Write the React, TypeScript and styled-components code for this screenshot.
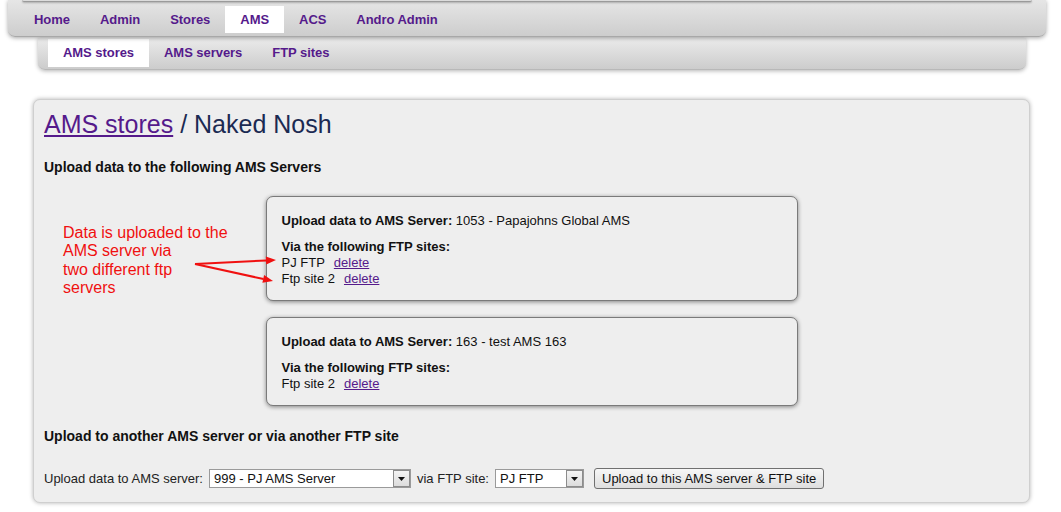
import React from "react";
import styled, { createGlobalStyle } from "styled-components";

const Global = createGlobalStyle`
  html, body { margin: 0; padding: 0; background: #ffffff; }
  body { font-family: "Liberation Sans", Arial, sans-serif; color: #111; }
  * { box-sizing: border-box; }
`;

const Page = styled.div`
  width: 1061px;
  padding-bottom: 10px;
`;

const MainNav = styled.div`
  margin: 0 15px 0 8px;
  height: 37px;
  background: linear-gradient(#e6e6e6, #cdcdcd);
  border-bottom: 1px solid #a8a8a8;
  border-radius: 0 0 7px 7px;
  box-shadow: 0 1px 4px rgba(0, 0, 0, 0.35);
  position: relative;
  z-index: 2;
`;

const TopStrip = styled.div`
  height: 2px;
  margin: 0 14px;
  background: #dcdcdc;
  border-bottom: 1px solid #9a9a9a;
  border-radius: 0 0 4px 4px;
  box-shadow: 0 1px 2px rgba(0, 0, 0, 0.25);
`;

const NavList = styled.div`
  display: flex;
  padding: 4px 0 0 11px;
`;

const NavItem = styled.a<{ $active?: boolean; $sub?: boolean }>`
  display: block;
  height: ${(p) => (p.$sub ? 28 : 27)}px;
  line-height: ${(p) => (p.$sub ? 28 : 27)}px;
  padding: 0 15px;
  font-size: 13px;
  font-weight: bold;
  letter-spacing: -0.05px;
  color: #551a8b;
  text-decoration: none;
  background: ${(p) => (p.$active ? "#ffffff" : "transparent")};
`;

const SubNav = styled.div`
  margin: 1px 35px 0 38px;
  height: 32px;
  background: linear-gradient(#ebebeb, #cccccc);
  border-bottom: 1px solid #b8b8b8;
  border-radius: 0 0 7px 7px;
  box-shadow: 0 1px 4px rgba(0, 0, 0, 0.3);
  display: flex;
  padding: 1px 0 0 10px;
  position: relative;
  z-index: 1;
`;

const Panel = styled.div`
  position: relative;
  margin: 29px 31px 0 33px;
  background: #eeeeee;
  border: 1px solid #cfcfcf;
  border-radius: 7px;
  box-shadow: 0 0 4px rgba(0, 0, 0, 0.3);
  padding: 9px 10px 13px 10px;
`;

const Title = styled.h1`
  margin: 0;
  font-size: 25px;
  line-height: 30px;
  font-weight: normal;
  color: #1b2a52;
`;

const TitleLink = styled.a`
  color: #551a8b;
  text-decoration: underline;
`;

const SectionHeading = styled.h2<{ $top: number }>`
  margin: ${(p) => p.$top}px 0 0 0;
  font-size: 14px;
  line-height: 18px;
  font-weight: bold;
  color: #111;
`;

const Cards = styled.div`
  display: flex;
  flex-direction: column;
  align-items: center;
  gap: 16px;
  margin-top: 20px;
`;

const Card = styled.div`
  width: 532px;
  border: 1px solid #7a7a7a;
  border-radius: 7px;
  background: #eeeeee;
  box-shadow: 0 1px 4px rgba(0, 0, 0, 0.45);
  padding: 16px 15px 13px 15px;
  font-size: 13px;
  line-height: 16px;
`;

const Line = styled.div<{ $gap?: boolean }>`
  margin-top: ${(p) => (p.$gap ? 10 : 0)}px;
`;

const Label = styled.b`
  font-weight: bold;
`;

const DelLink = styled.a`
  color: #551a8b;
  text-decoration: underline;
  margin-left: 9px;
`;

const Note = styled.div`
  position: absolute;
  left: 29px;
  top: 124px;
  width: 200px;
  font-size: 16px;
  line-height: 18.3px;
  color: #f01010;
`;

const Arrows = styled.svg`
  position: absolute;
  left: 157px;
  top: 152px;
  overflow: visible;
`;

const FormRow = styled.div`
  display: flex;
  align-items: center;
  margin-top: 23px;
  font-size: 13px;
  color: #222;
  height: 21px;
`;

const FieldLabel = styled.span<{ $gap: number }>`
  margin-right: ${(p) => p.$gap}px;
`;

const SelectWrap = styled.div<{ $w: number }>`
  position: relative;
  width: ${(p) => p.$w}px;
  height: 19px;
  margin-right: 6px;
`;

const Select = styled.select`
  appearance: none;
  -webkit-appearance: none;
  width: 100%;
  height: 19px;
  border: 1px solid #9a9a9a;
  background: #ffffff;
  font-family: "Liberation Sans", Arial, sans-serif;
  font-size: 13px;
  color: #111;
  padding: 0 0 0 4px;
  margin: 0;
  border-radius: 0;
  outline: none;
`;

const ArrowBox = styled.span`
  position: absolute;
  right: 1px;
  top: 1px;
  width: 17px;
  height: 17px;
  background: linear-gradient(#f4f4f4, #dcdcdc);
  border: 1px solid #8c8c8c;
  pointer-events: none;
  display: flex;
  align-items: center;
  justify-content: center;
`;

const Button = styled.button`
  margin-left: 4px;
  height: 21px;
  padding: 0 7px;
  border: 1px solid #707070;
  border-radius: 3px;
  background: linear-gradient(#f7f7f7, #dedede);
  font-family: "Liberation Sans", Arial, sans-serif;
  font-size: 13px;
  color: #111;
`;

const Tri = () => (
  <svg width="7" height="4" viewBox="0 0 7 4">
    <path d="M0 0 H7 L3.5 4 Z" fill="#111" />
  </svg>
);

const SelectField = ({ w, value }: { w: number; value: string }) => (
  <SelectWrap $w={w}>
    <Select defaultValue={value}>
      <option>{value}</option>
    </Select>
    <ArrowBox>
      <Tri />
    </ArrowBox>
  </SelectWrap>
);

const servers = [
  {
    name: "1053 - Papajohns Global AMS",
    sites: ["PJ FTP", "Ftp site 2"],
  },
  { name: "163 - test AMS 163", sites: ["Ftp site 2"] },
];

export default function App() {
  return (
    <Page>
      <Global />
      <MainNav>
        <TopStrip />
        <NavList>
          <NavItem href="#">Home</NavItem>
          <NavItem href="#">Admin</NavItem>
          <NavItem href="#">Stores</NavItem>
          <NavItem href="#" $active>
            AMS
          </NavItem>
          <NavItem href="#">ACS</NavItem>
          <NavItem href="#">Andro Admin</NavItem>
        </NavList>
      </MainNav>
      <SubNav>
        <NavItem href="#" $sub $active>
          AMS stores
        </NavItem>
        <NavItem href="#" $sub>
          AMS servers
        </NavItem>
        <NavItem href="#" $sub>
          FTP sites
        </NavItem>
      </SubNav>
      <Panel>
        <Title>
          <TitleLink href="#">AMS stores</TitleLink> / Naked Nosh
        </Title>
        <SectionHeading $top={19}>
          Upload data to the following AMS Servers
        </SectionHeading>
        <Cards>
          {servers.map((s) => (
            <Card key={s.name}>
              <Line>
                <Label>Upload data to AMS Server:</Label> {s.name}
              </Line>
              <Line $gap>
                <Label>Via the following FTP sites:</Label>
              </Line>
              {s.sites.map((f) => (
                <Line key={f}>
                  {f}
                  <DelLink href="#">delete</DelLink>
                </Line>
              ))}
            </Card>
          ))}
        </Cards>
        <SectionHeading $top={21}>
          Upload to another AMS server or via another FTP site
        </SectionHeading>
        <FormRow>
          <FieldLabel $gap={6}>Upload data to AMS server:</FieldLabel>
          <SelectField w={202} value="999 - PJ AMS Server" />
          <FieldLabel $gap={6}>via FTP site:</FieldLabel>
          <SelectField w={89} value="PJ FTP" />
          <Button>Upload to this AMS server &amp; FTP site</Button>
        </FormRow>
        <Note>
          Data is uploaded to the
          <br />
          AMS server via
          <br />
          two different ftp
          <br />
          servers
        </Note>
        <Arrows width="90" height="35" viewBox="0 0 90 35">
          <line x1="4" y1="12" x2="75.5" y2="8.5" stroke="#f01010" strokeWidth="2" />
          <polygon points="85,8 75.2,12.5 74.8,4.5" fill="#f01010" />
          <line x1="4" y1="12" x2="72.5" y2="27" stroke="#f01010" strokeWidth="2" />
          <polygon points="82,29 71.4,30.8 73.1,23" fill="#f01010" />
        </Arrows>
      </Panel>
    </Page>
  );
}
